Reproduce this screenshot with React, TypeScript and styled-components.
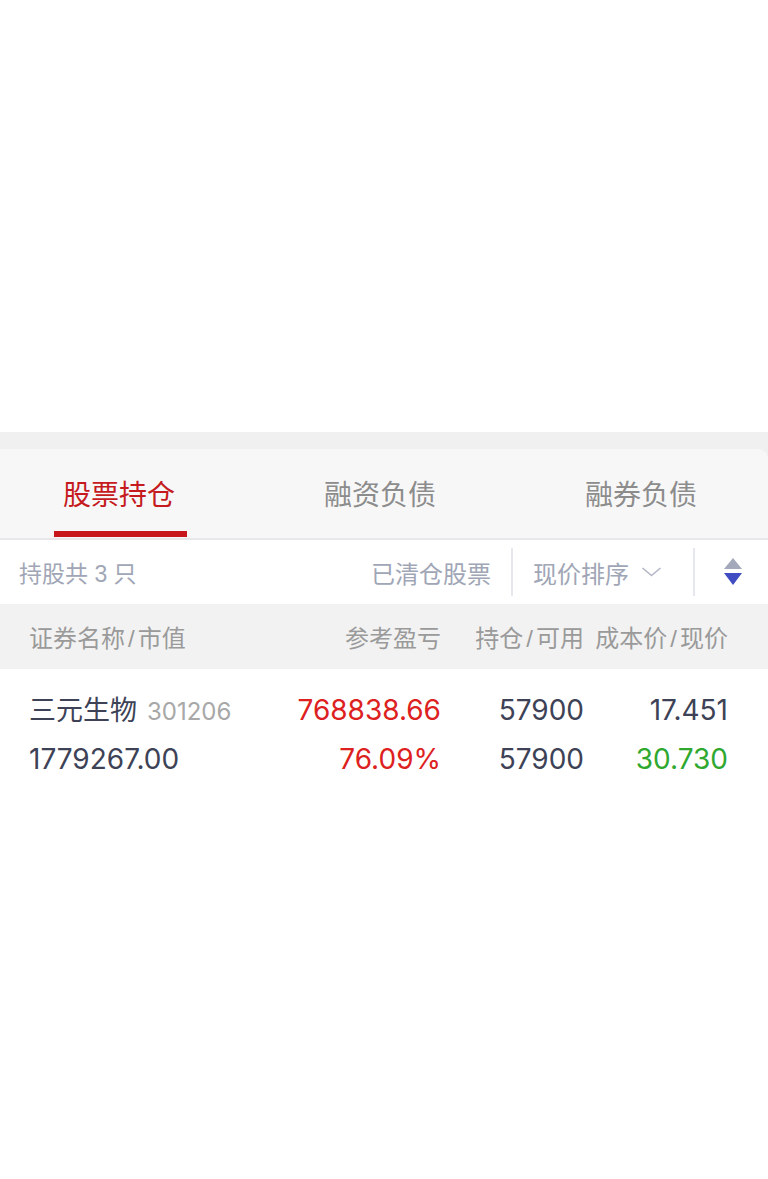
import React from 'react';
import styled, { createGlobalStyle } from 'styled-components';

const GlobalStyle = createGlobalStyle`
  html, body {
    margin: 0;
    padding: 0;
    background: #ffffff;
  }
  body {
    font-family: "Liberation Sans", "Noto Sans CJK SC", sans-serif;
  }
`;

type Tab = { label: string; active?: boolean };

const tabs: Tab[] = [
  { label: '股票持仓', active: true },
  { label: '融资负债' },
  { label: '融券负债' },
];

const App: React.FC = () => {
  return (
    <Page>
      <GlobalStyle />
      <TopSpace />
      <Strip />
      <TabBar>
        {tabs.map((t) => (
          <TabItem key={t.label} active={!!t.active}>
            {t.label}
            {t.active && <Underline />}
          </TabItem>
        ))}
      </TabBar>
      <FilterRow>
        <Count>持股共 3 只</Count>
        <FilterRight>
          <FilterText>已清仓股票</FilterText>
          <VDivider />
          <SortSelect>
            <FilterText>现价排序</FilterText>
            <svg width="21" height="12" viewBox="0 0 21 12">
              <path d="M1.5 2 L10.5 9.5 L19.5 2" fill="none" stroke="#b4b8c6" strokeWidth="1.6" />
            </svg>
          </SortSelect>
          <VDivider wide />
          <SortIcon>
            <svg width="20" height="30" viewBox="0 0 20 30">
              <path d="M10 1 L19 12 L1 12 Z" fill="#a3a8ba" />
              <path d="M1 16 L19 16 L10 28 Z" fill="#3f4cc2" />
            </svg>
          </SortIcon>
        </FilterRight>
      </FilterRow>
      <HeaderRow>
        <NameCell>
          <span>证券名称<Slash>/</Slash>市值</span>
        </NameCell>
        <NumCell>参考盈亏</NumCell>
        <NumCell>
          <span>持仓<Slash>/</Slash>可用</span>
        </NumCell>
        <NumCell>
          <span>成本价<Slash>/</Slash>现价</span>
        </NumCell>
      </HeaderRow>
      <DataRow>
        <NameCell>
          <Line>
            <StockName>三元生物</StockName>
            <Code>301206</Code>
          </Line>
          <Line>1779267.00</Line>
        </NameCell>
        <NumCell>
          <Line tone="red">768838.66</Line>
          <Line tone="red">76.09%</Line>
        </NumCell>
        <NumCell>
          <Line>57900</Line>
          <Line>57900</Line>
        </NumCell>
        <NumCell>
          <Line>17.451</Line>
          <Line tone="green">30.730</Line>
        </NumCell>
      </DataRow>
    </Page>
  );
};

export default App;

const Page = styled.div`
  width: 768px;
  min-height: 1179px;
  background: #ffffff;
`;

const TopSpace = styled.div`
  height: 432px;
`;

const Strip = styled.div`
  height: 17px;
  background: #f0f0f0;
`;

const TabBar = styled.div`
  display: flex;
  justify-content: space-between;
  align-items: center;
  height: 89px;
  padding: 0 71px 0 63px;
  background: #f7f7f7;
  border-top-right-radius: 10px;
  border-bottom: 2px solid #e8e8ea;
  box-shadow: 0 -17px 0 #f0f0f0;
`;

const TabItem = styled.div<{ active: boolean }>`
  position: relative;
  font-size: 28px;
  line-height: 93px;
  height: 89px;
  color: ${(p) => (p.active ? '#c51a20' : '#8c8c8c')};
`;

const Underline = styled.div`
  position: absolute;
  left: -9px;
  right: -12px;
  bottom: 1px;
  height: 6px;
  background: #c8161d;
`;

const FilterRow = styled.div`
  display: flex;
  align-items: center;
  justify-content: space-between;
  height: 64px;
  padding-left: 19px;
  background: #ffffff;
`;

const Count = styled.div`
  font-size: 23px;
  color: #a0a6b6;
`;

const FilterRight = styled.div`
  display: flex;
  align-items: center;
  height: 100%;
`;

const FilterText = styled.span`
  font-size: 24px;
  color: #a0a6b6;
`;

const VDivider = styled.div<{ wide?: boolean }>`
  width: 2px;
  height: 48px;
  margin: ${(p) => (p.wide ? '0 28px 0 31px' : '0 20px')};
  background: #e6e8ee;
`;

const SortSelect = styled.div`
  display: flex;
  align-items: center;
  gap: 12px;
`;

const SortIcon = styled.div`
  display: flex;
  align-items: center;
  width: 20px;
  margin-right: 25px;
`;

const HeaderRow = styled.div`
  display: grid;
  grid-template-columns: 1fr 172px 143px 144px;
  align-items: center;
  height: 65px;
  padding: 0 40px 0 29px;
  background: #f2f2f2;
  font-size: 24px;
  color: #9a9a9a;
`;

const Slash = styled.span`
  margin: 0 3px;
`;

const DataRow = styled.div`
  display: grid;
  grid-template-columns: 1fr 172px 143px 144px;
  padding: 17px 40px 0 29px;
  font-family: Inter, "Noto Sans CJK SC", sans-serif;
  font-size: 28px;
  color: #3d4256;
`;

const NameCell = styled.div`
  display: flex;
  flex-direction: column;
  align-items: flex-start;
  justify-content: center;
`;

const NumCell = styled.div`
  display: flex;
  flex-direction: column;
  align-items: flex-end;
  justify-content: center;
  text-align: right;
`;

const toneColor: Record<string, string> = {
  red: '#dd2020',
  green: '#2fa82f',
  base: '#3d4256',
};

const Line = styled.div<{ tone?: 'red' | 'green' | 'base' }>`
  display: flex;
  align-items: baseline;
  gap: 10px;
  height: 49px;
  line-height: 49px;
  color: ${(p) => toneColor[p.tone || 'base']};
`;

const StockName = styled.span`
  font-size: 27px;
`;

const Code = styled.span`
  font-size: 24px;
  color: #a8a8a8;
`;
